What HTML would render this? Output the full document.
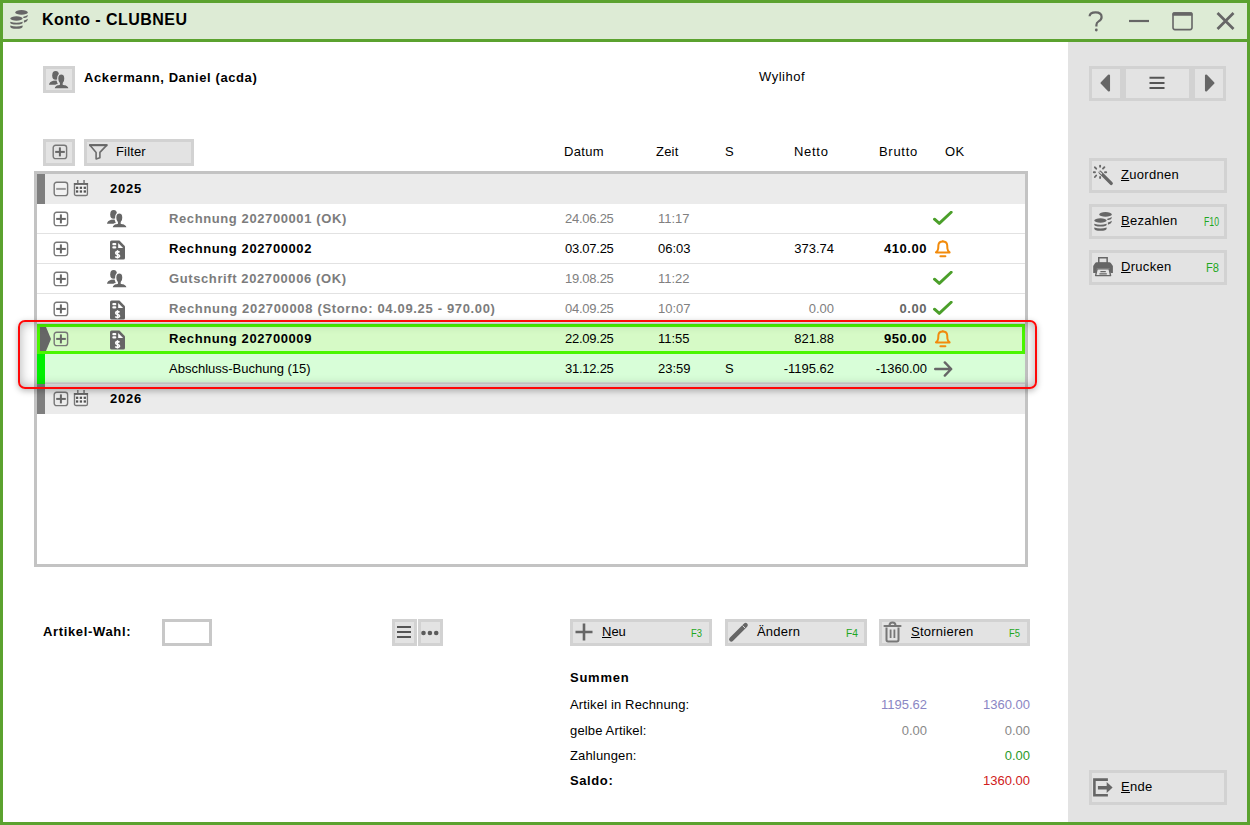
<!DOCTYPE html><html><head><meta charset="utf-8"><style>
*{margin:0;padding:0;box-sizing:border-box}
html,body{width:1250px;height:825px;overflow:hidden}
body{position:relative;background:#5ba22f;font-family:"Liberation Sans",sans-serif;font-size:13px;color:#000}
.a{position:absolute;display:block}
.t{position:absolute;white-space:nowrap}
.b{font-weight:bold;letter-spacing:0.6px}
.btn{position:absolute;border:3px solid #d2d2d2;background:#e3e3e3}
.fk{color:#1fa71f;font-size:11.5px}
u{text-decoration:underline;text-underline-offset:1px}
</style></head><body>
<div class="a" style="left:3px;top:3px;width:1244px;height:36px;background:#ddebd5"></div>
<svg class="a" style="left:10px;top:10px" width="19" height="20" viewBox="0 0 19 20">
<g fill="#666"><ellipse cx="11.5" cy="2.4" rx="6.2" ry="2.3"/><ellipse cx="6.45" cy="8.5" rx="6.2" ry="2.2"/>
<path d="M13.3 6.7 Q16.2 6.2 17.7 5.0 V5.9 Q17.7 7.3 14.6 7.9 Q13.6 8.1 13.3 7.9 Z"/>
<path d="M13.9 10.5 Q16.4 10 17.7 8.8 V9.8 Q17.7 11.6 14.6 12.4 Q14 12.6 13.9 12.3 Z"/>
<path d="M0.25 11.7 Q6.45 13.7 12.65 11.7 V12.5 Q12.65 14.6 6.45 14.6 Q0.25 14.6 0.25 12.5 Z"/>
<path d="M0.25 15.5 Q6.45 17.5 12.65 15.5 V16.4 Q12.65 18.8 6.45 18.8 Q0.25 18.8 0.25 16.4 Z"/></g></svg>
<div class="t" style="left:42px;top:2px;height:36px;line-height:36px;font-size:16px;font-weight:bold;letter-spacing:0.45px">Konto - CLUBNEU</div>
<svg class="a" style="left:1080px;top:8px" width="160" height="28" viewBox="0 0 160 28">
<path d="M9.6 8.2 Q9.8 4.4 15.6 4.4 Q21.6 4.4 21.6 9 Q21.6 11.8 18.6 13.4 Q16.4 14.6 16.4 17 V18.4" fill="none" stroke="#666" stroke-width="2.2"/><circle cx="16.3" cy="22" r="1.4" fill="#666"/>
<path d="M49 13 H69" stroke="#666" stroke-width="2.2"/>
<rect x="93" y="5" width="19" height="16.6" rx="2" fill="none" stroke="#666" stroke-width="1.6"/><rect x="92.5" y="4.2" width="20" height="3.6" rx="1.2" fill="#666"/>
<path d="M137.5 5 L153.5 21 M153.5 5 L137.5 21" stroke="#666" stroke-width="2.7"/>
</svg>
<div class="a" style="left:3px;top:42px;width:1065px;height:780px;background:#fff"></div>
<div class="a" style="left:1068px;top:42px;width:179px;height:780px;background:#e3e3e3"></div>
<div class="btn" style="left:43px;top:66px;width:32px;height:27px"></div>
<svg class="a" style="left:49px;top:70.7px" width="21" height="19" viewBox="0 0 21 19"><g fill="#666"><ellipse cx="6.6" cy="4.4" rx="3.4" ry="4.4"/><path d="M0 13.8 Q0.2 10.8 4.2 9.8 L7.5 9.4 L9 13.8 Z"/></g>
<path d="M4.9 17.9 Q5 15.2 7.6 13.9 L10.3 13.4 Q10.3 12.9 10.3 12.1 Q8.7 10.6 8.7 7.7 Q8.7 3 12.3 3 Q15.9 3 15.9 7.7 Q15.9 10.6 14.3 12.1 Q14.3 12.9 14.3 13.4 L17.2 13.9 Q20.1 15.2 20.3 17.9 Z" fill="#666" stroke="#e3e3e3" stroke-width="1.2" stroke-linejoin="round"/></svg>
<div class="t" style="left:84px;top:63.5px;height:27px;line-height:27px;font-weight:bold;letter-spacing:0.6px">Ackermann, Daniel (acda)</div>
<div class="t" style="left:759px;top:66px;height:22px;line-height:22px;letter-spacing:0.5px">Wylihof</div>
<div class="btn" style="left:43px;top:139px;width:32px;height:27px"></div>
<svg class="a" style="left:52px;top:144px" width="16" height="16" viewBox="0 0 16 16"><rect x="1.2" y="1.2" width="13.4" height="13.4" rx="2.4" fill="none" stroke="#777" stroke-width="1.4"/><path d="M3.2 7.9 H12.8" stroke="#666" stroke-width="2"/><path d="M7.9 3.4 V12.4" stroke="#666" stroke-width="2"/></svg>
<div class="btn" style="left:84px;top:139px;width:110px;height:27px"></div>
<svg class="a" style="left:88px;top:143px" width="21" height="18" viewBox="0 0 21 18"><path d="M1.8 2.1 H18.8 L11.9 9.4 V14.8 L8.1 15.9 V9.4 Z" fill="none" stroke="#6c6c6c" stroke-width="1.6" stroke-linejoin="round"/><path d="M1.2 2.2 H19.4" stroke="#666" stroke-width="2"/></svg>
<div class="t" style="left:116px;top:138px;height:27px;line-height:27px;letter-spacing:0.15px">Filter</div>
<div class="t" style="left:564px;top:139px;height:25px;line-height:25px;letter-spacing:0.3px">Datum</div>
<div class="t" style="left:656px;top:139px;height:25px;line-height:25px;letter-spacing:0.2px">Zeit</div>
<div class="t" style="left:725px;top:139px;height:25px;line-height:25px;letter-spacing:0px">S</div>
<div class="t" style="left:794px;top:139px;height:25px;line-height:25px;letter-spacing:0.7px">Netto</div>
<div class="t" style="left:879px;top:139px;height:25px;line-height:25px;letter-spacing:0.7px">Brutto</div>
<div class="t" style="left:945px;top:139px;height:25px;line-height:25px;letter-spacing:0.3px">OK</div>
<div class="a" style="left:34px;top:171px;width:994px;height:396px;border:3px solid #c3c3c3;background:#fff"></div>
<div class="a" style="left:37px;top:174px;width:988px;height:30px;background:#ebebeb"></div>
<div class="a" style="left:37px;top:174px;width:8px;height:30px;background:#7f7f7f"></div>
<svg class="a" style="left:53px;top:181px" width="16" height="16" viewBox="0 0 16 16"><rect x="1.2" y="1.2" width="13.4" height="13.4" rx="2.4" fill="#f2f2f2" stroke="#777" stroke-width="1.4"/><path d="M3.2 7.9 H12.8" stroke="#999" stroke-width="2"/></svg>
<svg class="a" style="left:73px;top:180px" width="17" height="17" viewBox="0 0 17 17"><rect x="1.5" y="3.6" width="12.9" height="11.9" rx="1.6" fill="#f4f4f4" stroke="#777" stroke-width="1.4"/><rect x="0.8" y="3" width="14.3" height="1.9" fill="#666"/><rect x="4.1" y="0" width="1.4" height="3.2" fill="#777"/><rect x="10.3" y="0" width="1.5" height="3.2" fill="#777"/>
<g fill="#555"><rect x="2.95" y="6.65" width="2.3" height="2.3"/><rect x="6.75" y="6.65" width="2.3" height="2.3"/><rect x="10.65" y="6.65" width="2.3" height="2.3"/><rect x="2.95" y="10.35" width="2.3" height="2.3"/><rect x="6.75" y="10.35" width="2.3" height="2.3"/><rect x="10.65" y="10.35" width="2.3" height="2.3"/></g></svg>
<div class="t" style="left:110px;top:174px;height:30px;line-height:30px;font-weight:bold;letter-spacing:0.8px">2025</div>
<div class="a" style="left:37px;top:233px;width:988px;height:1px;background:#e2e2e2"></div>
<svg class="a" style="left:53px;top:211px" width="16" height="16" viewBox="0 0 16 16"><rect x="1.2" y="1.2" width="13.4" height="13.4" rx="2.4" fill="none" stroke="#777" stroke-width="1.4"/><path d="M3.2 7.9 H12.8" stroke="#666" stroke-width="2"/><path d="M7.9 3.4 V12.4" stroke="#666" stroke-width="2"/></svg>
<svg class="a" style="left:107px;top:210px" width="21" height="19" viewBox="0 0 21 19"><g fill="#666"><ellipse cx="6.6" cy="4.4" rx="3.4" ry="4.4"/><path d="M0 13.8 Q0.2 10.8 4.2 9.8 L7.5 9.4 L9 13.8 Z"/></g>
<path d="M4.9 17.9 Q5 15.2 7.6 13.9 L10.3 13.4 Q10.3 12.9 10.3 12.1 Q8.7 10.6 8.7 7.7 Q8.7 3 12.3 3 Q15.9 3 15.9 7.7 Q15.9 10.6 14.3 12.1 Q14.3 12.9 14.3 13.4 L17.2 13.9 Q20.1 15.2 20.3 17.9 Z" fill="#666" stroke="#fff" stroke-width="1.2" stroke-linejoin="round"/></svg>
<div class="t" style="left:169px;top:204px;height:29px;line-height:29px;font-weight:bold;letter-spacing:0.6px;color:#7c7c7c">Rechnung 202700001 (OK)</div>
<div class="t" style="left:565px;top:204px;height:29px;line-height:29px;color:#808080;letter-spacing:-0.25px">24.06.25</div>
<div class="t" style="left:658px;top:204px;height:29px;line-height:29px;color:#808080">11:17</div>
<svg class="a" style="left:933px;top:211px" width="20" height="15" viewBox="0 0 20 15"><path d="M1.5 8.2 L6.3 12.4 L18.2 1.2" fill="none" stroke="#4b9f2a" stroke-width="2.9" stroke-linecap="round" stroke-linejoin="round"/></svg>
<div class="a" style="left:37px;top:263px;width:988px;height:1px;background:#e2e2e2"></div>
<svg class="a" style="left:53px;top:241px" width="16" height="16" viewBox="0 0 16 16"><rect x="1.2" y="1.2" width="13.4" height="13.4" rx="2.4" fill="none" stroke="#777" stroke-width="1.4"/><path d="M3.2 7.9 H12.8" stroke="#666" stroke-width="2"/><path d="M7.9 3.4 V12.4" stroke="#666" stroke-width="2"/></svg>
<svg class="a" style="left:110px;top:240px" width="16" height="21" viewBox="0 0 16 21"><g transform="translate(0,0.6)"><path d="M1.6 0 H9.4 L15 5.6 V17.4 Q15 19 13.4 19 H1.6 Q0 19 0 17.4 V1.6 Q0 0 1.6 0 Z" fill="#666"/>
<path d="M8.2 2.5 V7.4 H13.1 Z" fill="#fff"/><rect x="2.3" y="2.4" width="4" height="2.2" rx="1" fill="#fff"/><rect x="2.3" y="5.6" width="4" height="2.3" rx="1.1" fill="#fff"/>
<path d="M9.5 11.8 Q8.8 11 7.5 11 Q5.7 11 5.7 12.4 Q5.7 13.5 7.5 13.85 Q9.5 14.2 9.5 15.5 Q9.5 16.8 7.5 16.8 Q6 16.8 5.3 15.9" fill="none" stroke="#fff" stroke-width="1.6"/><path d="M7.5 9.6 V17.8" stroke="#fff" stroke-width="1.4"/></g></svg>
<div class="t" style="left:169px;top:234px;height:29px;line-height:29px;font-weight:bold;letter-spacing:0.6px;color:#000">Rechnung 202700002</div>
<div class="t" style="left:565px;top:234px;height:29px;line-height:29px;color:#000;letter-spacing:-0.25px">03.07.25</div>
<div class="t" style="left:658px;top:234px;height:29px;line-height:29px;color:#000">06:03</div>
<div class="t" style="right:416px;top:234px;height:29px;line-height:29px;text-align:right;color:#000">373.74</div>
<div class="t" style="right:323px;top:234px;height:29px;line-height:29px;text-align:right;font-weight:bold;letter-spacing:0.55px;color:#000">410.00</div>
<svg class="a" style="left:935px;top:240px" width="16" height="18" viewBox="0 0 16 18"><path d="M1 12.4 H14.6 Q12.6 11 12.4 8.5 L12.2 5.2 Q11.8 1.6 7.8 1.6 Q3.8 1.6 3.4 5.2 L3.2 8.5 Q3 11 1 12.4 Z" fill="none" stroke="#f28b0c" stroke-width="2" stroke-linejoin="round"/><circle cx="7.8" cy="1.2" r="1" fill="#f28b0c"/><path d="M5.4 16.2 H10.4" stroke="#f28b0c" stroke-width="2" stroke-linecap="round"/></svg>
<div class="a" style="left:37px;top:293px;width:988px;height:1px;background:#e2e2e2"></div>
<svg class="a" style="left:53px;top:271px" width="16" height="16" viewBox="0 0 16 16"><rect x="1.2" y="1.2" width="13.4" height="13.4" rx="2.4" fill="none" stroke="#777" stroke-width="1.4"/><path d="M3.2 7.9 H12.8" stroke="#666" stroke-width="2"/><path d="M7.9 3.4 V12.4" stroke="#666" stroke-width="2"/></svg>
<svg class="a" style="left:107px;top:270px" width="21" height="19" viewBox="0 0 21 19"><g fill="#666"><ellipse cx="6.6" cy="4.4" rx="3.4" ry="4.4"/><path d="M0 13.8 Q0.2 10.8 4.2 9.8 L7.5 9.4 L9 13.8 Z"/></g>
<path d="M4.9 17.9 Q5 15.2 7.6 13.9 L10.3 13.4 Q10.3 12.9 10.3 12.1 Q8.7 10.6 8.7 7.7 Q8.7 3 12.3 3 Q15.9 3 15.9 7.7 Q15.9 10.6 14.3 12.1 Q14.3 12.9 14.3 13.4 L17.2 13.9 Q20.1 15.2 20.3 17.9 Z" fill="#666" stroke="#fff" stroke-width="1.2" stroke-linejoin="round"/></svg>
<div class="t" style="left:169px;top:264px;height:29px;line-height:29px;font-weight:bold;letter-spacing:0.6px;color:#7c7c7c">Gutschrift 202700006 (OK)</div>
<div class="t" style="left:565px;top:264px;height:29px;line-height:29px;color:#808080;letter-spacing:-0.25px">19.08.25</div>
<div class="t" style="left:658px;top:264px;height:29px;line-height:29px;color:#808080">11:22</div>
<svg class="a" style="left:933px;top:271px" width="20" height="15" viewBox="0 0 20 15"><path d="M1.5 8.2 L6.3 12.4 L18.2 1.2" fill="none" stroke="#4b9f2a" stroke-width="2.9" stroke-linecap="round" stroke-linejoin="round"/></svg>
<div class="a" style="left:37px;top:323px;width:988px;height:1px;background:#e2e2e2"></div>
<svg class="a" style="left:53px;top:301px" width="16" height="16" viewBox="0 0 16 16"><rect x="1.2" y="1.2" width="13.4" height="13.4" rx="2.4" fill="none" stroke="#777" stroke-width="1.4"/><path d="M3.2 7.9 H12.8" stroke="#666" stroke-width="2"/><path d="M7.9 3.4 V12.4" stroke="#666" stroke-width="2"/></svg>
<svg class="a" style="left:110px;top:300px" width="16" height="21" viewBox="0 0 16 21"><g transform="translate(0,0.6)"><path d="M1.6 0 H9.4 L15 5.6 V17.4 Q15 19 13.4 19 H1.6 Q0 19 0 17.4 V1.6 Q0 0 1.6 0 Z" fill="#666"/>
<path d="M8.2 2.5 V7.4 H13.1 Z" fill="#fff"/><rect x="2.3" y="2.4" width="4" height="2.2" rx="1" fill="#fff"/><rect x="2.3" y="5.6" width="4" height="2.3" rx="1.1" fill="#fff"/>
<path d="M9.5 11.8 Q8.8 11 7.5 11 Q5.7 11 5.7 12.4 Q5.7 13.5 7.5 13.85 Q9.5 14.2 9.5 15.5 Q9.5 16.8 7.5 16.8 Q6 16.8 5.3 15.9" fill="none" stroke="#fff" stroke-width="1.6"/><path d="M7.5 9.6 V17.8" stroke="#fff" stroke-width="1.4"/></g></svg>
<div class="t" style="left:169px;top:294px;height:29px;line-height:29px;font-weight:bold;letter-spacing:0.66px;color:#7c7c7c">Rechnung 202700008 (Storno: 04.09.25 - 970.00)</div>
<div class="t" style="left:565px;top:294px;height:29px;line-height:29px;color:#808080;letter-spacing:-0.25px">04.09.25</div>
<div class="t" style="left:658px;top:294px;height:29px;line-height:29px;color:#808080">10:07</div>
<div class="t" style="right:416px;top:294px;height:29px;line-height:29px;text-align:right;color:#808080">0.00</div>
<div class="t" style="right:323px;top:294px;height:29px;line-height:29px;text-align:right;font-weight:bold;letter-spacing:0.55px;color:#666">0.00</div>
<svg class="a" style="left:933px;top:301px" width="20" height="15" viewBox="0 0 20 15"><path d="M1.5 8.2 L6.3 12.4 L18.2 1.2" fill="none" stroke="#4b9f2a" stroke-width="2.9" stroke-linecap="round" stroke-linejoin="round"/></svg>
<div class="a" style="left:37px;top:324px;width:988px;height:30px;background:#d6fac6;border:3px solid #4af600"></div>
<svg class="a" style="left:40px;top:327px" width="12" height="24" viewBox="0 0 12 24"><path d="M0 0 H6 L11 12 L6 24 H0 Z" fill="#666"/></svg>
<svg class="a" style="left:53px;top:331px" width="16" height="16" viewBox="0 0 16 16"><rect x="1.2" y="1.2" width="13.4" height="13.4" rx="2.4" fill="none" stroke="#777" stroke-width="1.4"/><path d="M3.2 7.9 H12.8" stroke="#666" stroke-width="2"/><path d="M7.9 3.4 V12.4" stroke="#666" stroke-width="2"/></svg>
<svg class="a" style="left:110px;top:330px" width="16" height="21" viewBox="0 0 16 21"><g transform="translate(0,0.6)"><path d="M1.6 0 H9.4 L15 5.6 V17.4 Q15 19 13.4 19 H1.6 Q0 19 0 17.4 V1.6 Q0 0 1.6 0 Z" fill="#666"/>
<path d="M8.2 2.5 V7.4 H13.1 Z" fill="#fff"/><rect x="2.3" y="2.4" width="4" height="2.2" rx="1" fill="#fff"/><rect x="2.3" y="5.6" width="4" height="2.3" rx="1.1" fill="#fff"/>
<path d="M9.5 11.8 Q8.8 11 7.5 11 Q5.7 11 5.7 12.4 Q5.7 13.5 7.5 13.85 Q9.5 14.2 9.5 15.5 Q9.5 16.8 7.5 16.8 Q6 16.8 5.3 15.9" fill="none" stroke="#fff" stroke-width="1.6"/><path d="M7.5 9.6 V17.8" stroke="#fff" stroke-width="1.4"/></g></svg>
<div class="t" style="left:169px;top:324px;height:29px;line-height:29px;font-weight:bold;letter-spacing:0.6px;color:#000">Rechnung 202700009</div>
<div class="t" style="left:565px;top:324px;height:29px;line-height:29px;color:#000;letter-spacing:-0.25px">22.09.25</div>
<div class="t" style="left:658px;top:324px;height:29px;line-height:29px;color:#000">11:55</div>
<div class="t" style="right:416px;top:324px;height:29px;line-height:29px;text-align:right;color:#000">821.88</div>
<div class="t" style="right:323px;top:324px;height:29px;line-height:29px;text-align:right;font-weight:bold;letter-spacing:0.55px;color:#000">950.00</div>
<svg class="a" style="left:935px;top:330px" width="16" height="18" viewBox="0 0 16 18"><path d="M1 12.4 H14.6 Q12.6 11 12.4 8.5 L12.2 5.2 Q11.8 1.6 7.8 1.6 Q3.8 1.6 3.4 5.2 L3.2 8.5 Q3 11 1 12.4 Z" fill="none" stroke="#f28b0c" stroke-width="2" stroke-linejoin="round"/><circle cx="7.8" cy="1.2" r="1" fill="#f28b0c"/><path d="M5.4 16.2 H10.4" stroke="#f28b0c" stroke-width="2" stroke-linecap="round"/></svg>
<div class="a" style="left:37px;top:354px;width:988px;height:30px;background:#d8fed8"></div>
<div class="a" style="left:37px;top:354px;width:8px;height:30px;background:#00f000"></div>
<div class="a" style="left:45px;top:382px;width:980px;height:2px;background:linear-gradient(#d8e8d8,#cfcfcf)"></div>
<div class="t" style="left:169px;top:354px;height:29px;line-height:29px;">Abschluss-Buchung (15)</div>
<div class="t" style="left:565px;top:354px;height:29px;line-height:29px;color:#000;letter-spacing:-0.25px">31.12.25</div>
<div class="t" style="left:658px;top:354px;height:29px;line-height:29px;color:#000">23:59</div>
<div class="t" style="left:725px;top:354px;height:29px;line-height:29px;">S</div>
<div class="t" style="right:416px;top:354px;height:29px;line-height:29px;text-align:right;color:#000">-1195.62</div>
<div class="t" style="right:323px;top:354px;height:29px;line-height:29px;text-align:right;">-1360.00</div>
<svg class="a" style="left:933.7px;top:361px" width="20" height="17" viewBox="0 0 20 17"><path d="M1.2 8 H16.8 M10.8 1.4 L17.2 8 L10.8 14.6" fill="none" stroke="#666" stroke-width="2.4" stroke-linecap="round" stroke-linejoin="round"/></svg>
<div class="a" style="left:37px;top:384px;width:988px;height:30px;background:#ebebeb"></div>
<div class="a" style="left:37px;top:384px;width:8px;height:30px;background:#7f7f7f"></div>
<svg class="a" style="left:53px;top:391px" width="16" height="16" viewBox="0 0 16 16"><rect x="1.2" y="1.2" width="13.4" height="13.4" rx="2.4" fill="none" stroke="#777" stroke-width="1.4"/><path d="M3.2 7.9 H12.8" stroke="#666" stroke-width="2"/><path d="M7.9 3.4 V12.4" stroke="#666" stroke-width="2"/></svg>
<svg class="a" style="left:73px;top:390px" width="17" height="17" viewBox="0 0 17 17"><rect x="1.5" y="3.6" width="12.9" height="11.9" rx="1.6" fill="#f4f4f4" stroke="#777" stroke-width="1.4"/><rect x="0.8" y="3" width="14.3" height="1.9" fill="#666"/><rect x="4.1" y="0" width="1.4" height="3.2" fill="#777"/><rect x="10.3" y="0" width="1.5" height="3.2" fill="#777"/>
<g fill="#555"><rect x="2.95" y="6.65" width="2.3" height="2.3"/><rect x="6.75" y="6.65" width="2.3" height="2.3"/><rect x="10.65" y="6.65" width="2.3" height="2.3"/><rect x="2.95" y="10.35" width="2.3" height="2.3"/><rect x="6.75" y="10.35" width="2.3" height="2.3"/><rect x="10.65" y="10.35" width="2.3" height="2.3"/></g></svg>
<div class="t" style="left:110px;top:384px;height:30px;line-height:30px;font-weight:bold;letter-spacing:0.8px">2026</div>
<div class="a" style="left:18px;top:319.5px;width:1019px;height:69px;border:2.2px solid #ff0808;border-radius:7px;box-shadow:0 2px 6px rgba(0,0,0,0.28), inset 0 0 12px rgba(0,0,0,0.32)"></div>
<div class="t" style="left:43px;top:617.5px;height:27px;line-height:27px;font-weight:bold;letter-spacing:0.65px">Artikel-Wahl:</div>
<div class="a" style="left:162px;top:619px;width:50px;height:27px;border:3px solid #c8c8c8;background:#fff"></div>
<div class="btn" style="left:392px;top:619px;width:25px;height:27px"></div>
<svg class="a" style="left:396px;top:625px" width="16" height="14" viewBox="0 0 16 14"><path d="M1 2 H15 M1 7 H15 M1 12 H15" stroke="#555" stroke-width="2"/></svg>
<div class="btn" style="left:418px;top:619px;width:25px;height:27px"></div>
<svg class="a" style="left:421px;top:629.3px" width="18" height="8" viewBox="0 0 18 8"><circle cx="2.5" cy="4" r="2.3" fill="#5c5c5c"/><circle cx="8.9" cy="4" r="2.3" fill="#5c5c5c"/><circle cx="15.2" cy="4" r="2.3" fill="#5c5c5c"/></svg>
<div class="btn" style="left:570px;top:619px;width:142px;height:27px"></div>
<svg class="a" style="left:574px;top:622px" width="20" height="20" viewBox="0 0 20 20"><path d="M10 1.5 V18.5 M1.5 10 H18.5" stroke="#666" stroke-width="2.6"/></svg>
<div class="t" style="left:602px;top:618px;height:27px;line-height:27px;"><u>N</u>eu</div>
<svg class="a" style="left:690px;top:625px;overflow:visible" width="15" height="16"><text x="1" y="12" font-family="Liberation Sans" font-size="11.5" fill="#1fa71f" textLength="11" lengthAdjust="spacingAndGlyphs">F3</text></svg>
<div class="btn" style="left:725px;top:619px;width:142px;height:27px"></div>
<svg class="a" style="left:728px;top:621px" width="22" height="22" viewBox="0 0 22 22"><path d="M3.3 18.4 L17.6 4.1" stroke="#666" stroke-width="4.4" stroke-linecap="round"/><path d="M14.6 4.6 L17.1 7.1" stroke="#e3e3e3" stroke-width="0.9"/></svg>
<div class="t" style="left:757px;top:618px;height:27px;line-height:27px;letter-spacing:0.2px">Ändern</div>
<svg class="a" style="left:845px;top:625px;overflow:visible" width="16" height="16"><text x="1" y="12" font-family="Liberation Sans" font-size="11.5" fill="#1fa71f" textLength="12" lengthAdjust="spacingAndGlyphs">F4</text></svg>
<div class="btn" style="left:879px;top:619px;width:151px;height:27px"></div>
<svg class="a" style="left:883px;top:621px" width="20" height="22" viewBox="0 0 20 22"><path d="M3.5 6.5 V18.8 Q3.5 20.4 5.1 20.4 H13.9 Q15.5 20.4 15.5 18.8 V6.5" fill="none" stroke="#777" stroke-width="2"/><path d="M1.5 5 H17.5" stroke="#777" stroke-width="2.2" stroke-linecap="round"/><path d="M6.5 4.5 Q6.5 1.5 9.5 1.5 Q12.5 1.5 12.5 4.5" fill="none" stroke="#777" stroke-width="2"/><path d="M7.6 8.5 V17 M11.4 8.5 V17" stroke="#777" stroke-width="1.8"/></svg>
<div class="t" style="left:911px;top:618px;height:27px;line-height:27px;letter-spacing:0.25px"><u>S</u>tornieren</div>
<svg class="a" style="left:1008px;top:625px;overflow:visible" width="15" height="16"><text x="1" y="12" font-family="Liberation Sans" font-size="11.5" fill="#1fa71f" textLength="11" lengthAdjust="spacingAndGlyphs">F5</text></svg>
<div class="t" style="left:570px;top:666px;height:24px;line-height:24px;font-weight:bold;letter-spacing:0.75px">Summen</div>
<div class="t" style="left:570px;top:692px;height:25px;line-height:25px;letter-spacing:0.15px">Artikel in Rechnung:</div>
<div class="t" style="right:323px;top:692px;height:25px;line-height:25px;text-align:right;color:#8a86c4">1195.62</div>
<div class="t" style="right:220px;top:692px;height:25px;line-height:25px;text-align:right;color:#8a86c4">1360.00</div>
<div class="t" style="left:570px;top:718px;height:25px;line-height:25px;letter-spacing:0.15px">gelbe Artikel:</div>
<div class="t" style="right:323px;top:718px;height:25px;line-height:25px;text-align:right;color:#888">0.00</div>
<div class="t" style="right:220px;top:718px;height:25px;line-height:25px;text-align:right;color:#888">0.00</div>
<div class="t" style="left:570px;top:743px;height:25px;line-height:25px;letter-spacing:0.15px">Zahlungen:</div>
<div class="t" style="right:220px;top:743px;height:25px;line-height:25px;text-align:right;color:#2a9a2a">0.00</div>
<div class="t" style="left:570px;top:768px;height:25px;line-height:25px;font-weight:bold;letter-spacing:0.6px">Saldo:</div>
<div class="t" style="right:220px;top:768px;height:25px;line-height:25px;text-align:right;color:#d02020">1360.00</div>
<div class="a" style="left:1089px;top:66px;width:137px;height:35px;background:#d2d2d2"></div>
<div class="a" style="left:1092px;top:69px;width:28px;height:29px;background:#e3e3e3"></div>
<div class="a" style="left:1126px;top:69px;width:63px;height:29px;background:#e3e3e3"></div>
<div class="a" style="left:1195px;top:69px;width:28px;height:29px;background:#e3e3e3"></div>
<svg class="a" style="left:1100px;top:74px" width="11" height="18" viewBox="0 0 11 18"><path d="M8.9 1.6 V16.4 L1.7 9 Z" fill="#666" stroke="#666" stroke-width="2.3" stroke-linejoin="round"/></svg>
<svg class="a" style="left:1149px;top:76px" width="16" height="13" viewBox="0 0 16 13"><path d="M0.5 1.8 H15.5 M0.5 6.9 H15.5 M0.5 12 H15.5" stroke="#555" stroke-width="2"/></svg>
<svg class="a" style="left:1204px;top:74px" width="11" height="18" viewBox="0 0 11 18"><path d="M2.1 1.6 V16.4 L9.3 9 Z" fill="#666" stroke="#666" stroke-width="2.3" stroke-linejoin="round"/></svg>
<div class="btn" style="left:1089px;top:158px;width:138px;height:35px"></div>
<svg class="a" style="left:1092px;top:164px" width="22" height="22" viewBox="0 0 22 22"><path d="M8.2 8.4 L19.2 19.4" stroke="#666" stroke-width="3.4" stroke-linecap="round"/><path d="M7.6 7.8 L9.6 9.8" stroke="#e3e3e3" stroke-width="1.2" stroke-linecap="round"/><g stroke="#6a6a6a" stroke-width="1.9" stroke-linecap="round"><path d="M8.1 1.6 V2.8 M8.1 13 V14 M1.8 8.3 H3 M13 8.3 H14.2 M2.9 3.3 L4.2 4.7 M12.4 3.2 L11 4.6 M2.9 13 L4.2 11.5"/></g></svg>
<div class="t" style="left:1121px;top:157px;height:35px;line-height:35px;letter-spacing:0.3px"><u>Z</u>uordnen</div>
<div class="btn" style="left:1089px;top:204px;width:138px;height:35px"></div>
<svg class="a" style="left:1094px;top:212px" width="19" height="20" viewBox="0 0 19 20">
<g fill="#666"><ellipse cx="11.5" cy="2.4" rx="6.2" ry="2.3"/><ellipse cx="6.45" cy="8.5" rx="6.2" ry="2.2"/>
<path d="M13.3 6.7 Q16.2 6.2 17.7 5.0 V5.9 Q17.7 7.3 14.6 7.9 Q13.6 8.1 13.3 7.9 Z"/>
<path d="M13.9 10.5 Q16.4 10 17.7 8.8 V9.8 Q17.7 11.6 14.6 12.4 Q14 12.6 13.9 12.3 Z"/>
<path d="M0.25 11.7 Q6.45 13.7 12.65 11.7 V12.5 Q12.65 14.6 6.45 14.6 Q0.25 14.6 0.25 12.5 Z"/>
<path d="M0.25 15.5 Q6.45 17.5 12.65 15.5 V16.4 Q12.65 18.8 6.45 18.8 Q0.25 18.8 0.25 16.4 Z"/></g></svg>
<div class="t" style="left:1121px;top:203px;height:35px;line-height:35px;letter-spacing:0.3px"><u>B</u>ezahlen</div>
<svg class="a" style="left:1203px;top:214px;overflow:visible" width="19" height="16"><text x="1" y="12" font-family="Liberation Sans" font-size="12.5" fill="#1fa71f" textLength="15" lengthAdjust="spacingAndGlyphs">F10</text></svg>
<div class="btn" style="left:1089px;top:250px;width:138px;height:35px"></div>
<svg class="a" style="left:1092px;top:256px" width="22" height="22" viewBox="0 0 22 22"><rect x="6.75" y="1.75" width="8.4" height="5.6" fill="none" stroke="#666" stroke-width="1.5"/><path d="M4.5 6.2 H17.3 Q18.3 6.2 19 7.2 L20.9 10 V16.9 H18.4 L17.2 12.3 H5 L3.8 16.9 H1.2 V10 L3 7.2 Q3.6 6.2 4.5 6.2 Z" fill="#666"/><path d="M5.1 12.9 H17.1 L18.6 19.6 H3.6 Z" fill="none" stroke="#666" stroke-width="1.4" stroke-linejoin="round"/><path d="M8.4 15.6 H13.8 M7.4 17.8 H14.8" stroke="#666" stroke-width="1.2"/></svg>
<div class="t" style="left:1121px;top:249px;height:35px;line-height:35px;letter-spacing:0.3px"><u>D</u>rucken</div>
<svg class="a" style="left:1205px;top:260px;overflow:visible" width="17" height="16"><text x="1" y="12" font-family="Liberation Sans" font-size="12.5" fill="#1fa71f" textLength="13" lengthAdjust="spacingAndGlyphs">F8</text></svg>
<div class="btn" style="left:1089px;top:770px;width:138px;height:35px"></div>
<svg class="a" style="left:1092px;top:777px" width="22" height="21" viewBox="0 0 22 21"><path d="M15.9 2.6 H2.4 V18.3 H15.9" fill="none" stroke="#666" stroke-width="2.6"/><path d="M5.9 10.75 H15" stroke="#666" stroke-width="3.5"/><path d="M14.7 5.1 L20.6 10.6 L14.7 16 Z" fill="#666"/></svg>
<div class="t" style="left:1121px;top:769px;height:35px;line-height:35px;letter-spacing:0.3px"><u>E</u>nde</div>
</body></html>
